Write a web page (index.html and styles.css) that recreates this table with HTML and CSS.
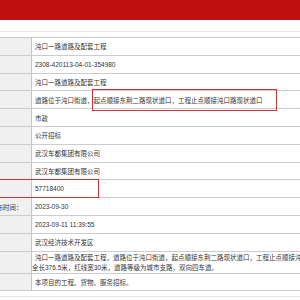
FILE: index.html
```html
<!DOCTYPE html>
<html lang="zh">
<head>
<meta charset="utf-8">
<link rel="stylesheet" href="styles.css">
</head>
<body>
<div class="page">
  <div class="topbar"></div>
  <div class="subbar"></div>
  <div class="table">
    <div class="row"><div class="label">项目名称：</div><div class="value">沌口一路道路及配套工程</div></div>
    <div class="row"><div class="label">项目代码：</div><div class="value">2308-420113-04-01-354980</div></div>
    <div class="row"><div class="label">标段名称：</div><div class="value">沌口一路道路及配套工程</div></div>
    <div class="row"><div class="label">建设地点：</div><div class="value">道路位于沌口街道，<span class="mark mark-a">起点顺接东荆二路现状道口，工程止点顺接沌口路现状道口</span></div></div>
    <div class="row"><div class="label">行业类型：</div><div class="value">市政</div></div>
    <div class="row"><div class="label">招标方式：</div><div class="value">公开招标</div></div>
    <div class="row"><div class="label">项目业主：</div><div class="value">武汉车都集团有限公司</div></div>
    <div class="row"><div class="label">招标人：</div><div class="value">武汉车都集团有限公司</div></div>
    <div class="row"><div class="label">总投资：</div><div class="value"><span class="mark mark-b">57718400</span></div></div>
    <div class="row"><div class="label">招标公告发布时间：</div><div class="value">2023-09-30</div></div>
    <div class="row"><div class="label">发布日期：</div><div class="value">2023-09-11 11:39:55</div></div>
    <div class="row"><div class="label">所属区域：</div><div class="value">武汉经济技术开发区</div></div>
    <div class="row row-tall"><div class="label">项目概况：</div><div class="value value-wrap"><span class="line-first">沌口一路道路及配套工程，道路位于沌口街道，起点顺接东荆二路现状道口，工程止点顺接沌口路现状道口，</span><span class="line-next">全长376.5米，红线宽30米，道路等级为城市支路，双向四车道。</span></div></div>
    <div class="row row-last"><div class="label">招标范围：</div><div class="value">本项目的工程、货物、服务招标。</div></div>
  </div>
</div>
</body>
</html>
```

FILE: styles.css
```css
html, body {
  margin: 0;
  padding: 0;
  overflow: hidden;
  background: #ffffff;
}

.page {
  width: 300px;
  height: 300px;
  overflow: hidden;
  font-family: "Liberation Sans", "Noto Sans CJK SC", sans-serif;
  font-size: 6.5px;
  color: #333333;
}

.topbar {
  height: 20px;
  background: #c00f10;
}

.subbar {
  height: 11px;
  border-bottom: 1px solid #e6e6e6;
  margin-bottom: 5px;
}

.table {
  margin-left: -40px;
  width: 420px;
  border-top: 1px solid #c8c8c8;
  border-bottom: 1px solid #e2e2e2;
  padding-bottom: 5px;
}

.row {
  display: grid;
  grid-template-columns: 72px 1fr;
  height: 17.8px;
  box-sizing: border-box;
  border-bottom: 1px solid #cccccc;
}

.row-tall {
  height: 22px;
}

.row-last {
  height: 17px;
}

.label {
  background: #f0f0f0;
  border-right: 1px solid #c4c4c4;
  padding-left: 4px;
  display: flex;
  align-items: center;
  white-space: nowrap;
  overflow: hidden;
}

.value {
  padding-left: 3px;
  display: flex;
  align-items: center;
  white-space: nowrap;
}

.value-wrap {
  display: block;
  padding-left: 0;
  padding-top: 1px;
  line-height: 10px;
}

.line-first {
  display: block;
  padding-left: 3px;
}

.line-next {
  display: block;
}

.mark {
  position: relative;
}

.mark::after {
  content: "";
  position: absolute;
  border: 1.5px solid #cf3433;
  pointer-events: none;
}

.mark-a::after {
  left: -2px;
  right: -14px;
  top: -6px;
  bottom: -6px;
}

.mark-b::after {
  left: -45px;
  right: -35px;
  top: -6px;
  bottom: -6px;
}
```
